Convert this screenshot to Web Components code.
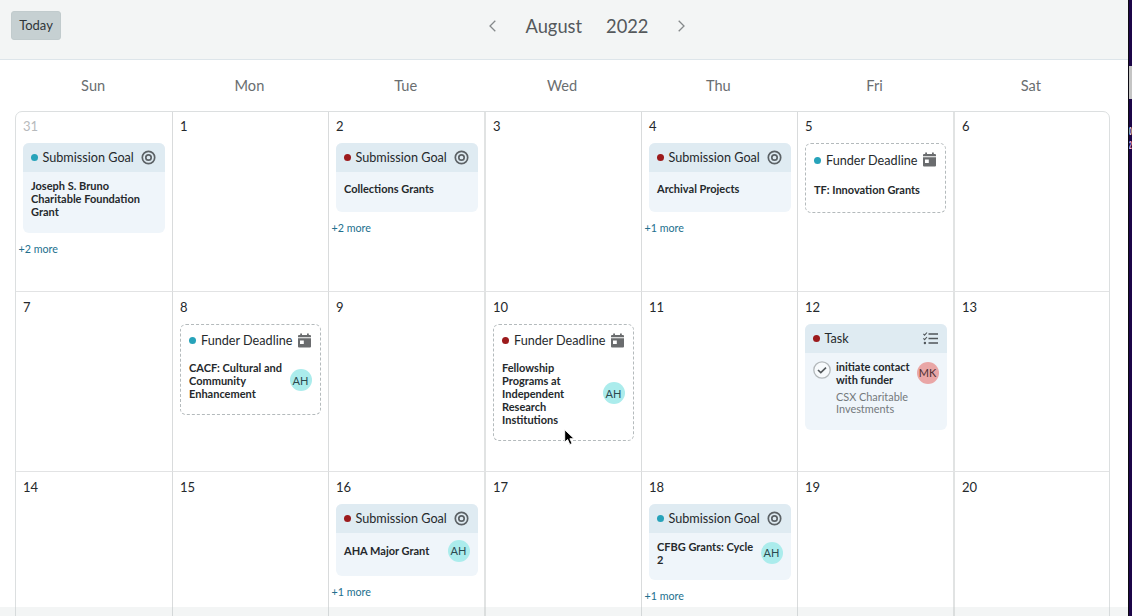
<!DOCTYPE html>
<html lang="en">
<head>
<meta charset="utf-8">
<title>Calendar</title>
<style>
html, body{
margin:0; height:100%;
overflow:hidden;
background:#1c0548;
font-family: Lato, "Liberation Sans", sans-serif;
}
</style>
</head>
<body>
<cal-app></cal-app>

<script>
let define= (name, html, setup)=> {
let template= document.createElement("template");
template.innerHTML= html;
customElements.define(name, class extends HTMLElement{
constructor(){
super();
this.attachShadow({mode:"open"}).append(template.content.cloneNode(true));
}
connectedCallback(){
if(setup) setup(this, this.shadowRoot);
}
});
};

let icons= {
target: `<svg width="15" height="15" viewBox="0 0 15 15" fill="none" stroke="#5c6266" stroke-width="1.7"><circle cx="7.5" cy="7.5" r="6.2"/><circle cx="7.5" cy="7.5" r="2.7"/></svg>`,
calendar: `<svg width="13" height="15" viewBox="0 0 13 15"><path fill="#6a6c6e" fill-rule="evenodd" d="M2.2 0.5h1.8v1.5h5V0.5h1.8v1.5H12a1 1 0 0 1 1 1v1.2H0V3a1 1 0 0 1 1-1h1.2zM0 5.2h13V13.500a1 1 0 0 1-1 1H1a1 1 0 0 1-1-1zM2 7.500v3.600h3.800V7.500z"/></svg>`,
list: `<svg width="15" height="13" viewBox="0 0 15 13" fill="none" stroke="#50565a"><path stroke-width="1.6" d="M5.500 2H15M5.500 6.500H15M5.500 11H15"/><path stroke-width="1.1" d="M.4 1.900l1.200 1.200L4 .5M.4 6.400l1.200 1.200L4 5"/><circle cx="1.900" cy="11" r="1.200" fill="#50565a" stroke="none"/></svg>`
};

//---Round initials
define("cal-avatar", `
<style>
:host{
display:flex; align-items:center; justify-content:center;
flex:none;
width:22px; height:22px;
margin-right:.5px;
border-radius:50%;
background:#abecec;
color:#2c4a50;
font-size:11px; font-weight:normal;
}
:host([tone="rose"]){ margin-top:2px; background:#e9a6a6; color:#4e3034; }
</style>
<slot></slot>
`);

//---Event card
define("cal-event", `
<style>
:host{
display:block;
box-sizing:border-box;
width:142px;
border-radius:6px;
background:#eff5fa;
overflow:hidden;
color:#25292c;
}
:host([kind="calendar"]){
width:141px;
background:#fff;
border:1px dashed #b4babc;
}
header{
display:flex; align-items:center;
box-sizing:border-box;
height:29px;
padding:0 9.5px 0 7.5px;
background:#dfebf2;
font-size:12.65px;
white-space:nowrap;
}
:host([kind="calendar"]) header{
background:none;
padding:3px 9px 0 8px;
}
.dot{
width:7px; height:7px;
margin-right:5px;
border-radius:50%;
background:#27a3ba;
}
:host([dot="red"]) .dot{ background:#9c1a1c; }
.icon{ margin-left:auto; display:flex; }
:host([kind="calendar"]) .icon{ margin-bottom:1px; }
.body{
display:flex; align-items:center; justify-content:space-between;
min-height:18px;
padding:7px 8px 14.5px 8px;
font:bold 11px/13px Lato, "Liberation Sans", sans-serif;
}
:host([kind="calendar"]) .body{ padding:7px 8px 14px 8px; }
:host([kind="list"]) .body{ align-items:flex-start; padding-bottom:16px; }
</style>
<header><span class="dot"></span><span class="label"></span><span class="icon"></span></header>
<div class="body"><slot></slot><slot name="who"></slot></div>
`, (el, root)=> {
let labels= {target:"Submission Goal", calendar:"Funder Deadline", list:"Task"};
let kind= el.getAttribute("kind");
root.querySelector(".label").textContent= labels[kind];
root.querySelector(".icon").innerHTML= icons[kind];
});

//---Task content: title and funder
define("cal-task", `
<style>
:host{ display:flex; flex:1; }
svg{ flex:none; margin:1px 5px 0 0; }
.sub{
margin-top:5.5px;
font-weight:normal; font-size:10.9px; line-height:11.5px;
color:#74797c;
}
</style>
<svg width="18" height="18" viewBox="0 0 18 18" fill="none"><circle cx="9" cy="9" r="8.200" fill="#f7fafc" stroke="#b3b8bb" stroke-width="1.300"/><path d="M5 9l2.800 2.700L13 6.700" stroke="#53585b" stroke-width="1.600"/></svg>
<div><slot></slot><div class="sub"><slot name="sub"></slot></div></div>
`);

//---One day of the grid
define("cal-day", `
<style>
:host{
display:block;
box-sizing:border-box;
min-width:0;
border-right:1px solid #d9dbdc;
border-bottom:1px solid #e2e3e4;
padding:7px 7px 0;
}
:host(:nth-child(7n+3)), :host(:nth-child(7n+6)){ border-right:2px solid #e1e3e3; }
:host(:nth-child(7n)){ border-right:0; }
.date{
height:24.5px;
font-size:13px; line-height:16px;
color:#25292c;
}
:host(:nth-child(-n+7)) .date{ margin-top:-1px; height:25px; }
:host([muted]) .date{ color:#b7babc; }
.more{
margin:8px 0 0 -4.5px;
font-size:10.7px; line-height:16px;
color:#236f8e;
}
</style>
<div class="date"></div>
<slot></slot>
<div class="more"></div>
`, (el, root)=> {
root.querySelector(".date").textContent= el.getAttribute("date");
let more= el.getAttribute("more");
if(more) root.querySelector(".more").textContent= `+${more} more`;
else root.querySelector(".more").remove();
});

//---Top bar
define("cal-bar", `
<style>
:host{
display:grid; grid-template-columns:1fr auto 1fr; align-items:start;
box-sizing:border-box;
height:60px;
padding:11px 0 0 11px;
background:#f3f5f5;
border-bottom:1px solid #dde5ea;
}
button{
justify-self:start;
width:50px; height:29px;
padding:0 0 1px;
border:1px solid #c1cbcd; border-radius:3px;
background:#c6d0d2;
color:#2f3538;
font:13px Lato, "Liberation Sans", sans-serif;
}
nav{
display:flex; align-items:center;
height:30px;
margin-left:35px;
font-size:18.3px;
color:#55595c;
}
.month{ margin:0 24px 0 30px; }
.year{ margin-right:30px; }
</style>
<button>Today</button>
<nav>
<svg width="7" height="12" viewBox="0 0 7 12" fill="none" stroke="#85898b" stroke-width="1.300"><path d="M6.300.800L1 6l5.300 5.200"/></svg>
<span class="month">August</span><span class="year">2022</span>
<svg width="7" height="12" viewBox="0 0 7 12" fill="none" stroke="#85898b" stroke-width="1.300"><path d="M.7.800L6 6 .7 11.200"/></svg>
</nav>
`);

//---Sliver of the window behind
define("cal-edge", `
<style>
:host{
display:flex; flex-direction:column; align-items:flex-start;
box-sizing:border-box;
width:4px;
padding-top:66px;
border-left:1px solid #0c0a12;
background:#1c0548;
overflow:hidden;
font:bold 11px/14px "Liberation Sans", sans-serif;
}
i{ width:3px; height:33px; margin-bottom:25px; background:#c4c4c4; }
span{ width:6px; margin-right:-3px; transform:scaleX(.45); transform-origin:0 0; color:#f4f1f8; }
span + span{ color:#efc2f2; }
</style>
<i></i><span>0</span><span>2</span>
`);

define("cal-app", `
<style>
:host{
display:grid; grid-template-columns:1128px 4px;
height:616px;
overflow:hidden;
}
main{
position:relative;
height:616px;
overflow:hidden;
background:#fff;
}
.week, .grid{
display:grid; grid-template-columns:repeat(7, 1fr);
box-sizing:border-box;
width:1095px;
margin-left:15px;
}
.week{
width:1094px;
height:51px;
font-size:14.6px; line-height:51px;
text-align:center;
color:#6a6e70;
}
.grid{
grid-template-columns:157px 156px 157px 156px 156px 157px 1fr;
grid-auto-rows:180px;
border:1px solid #dcdfe0;
border-radius:7px 7px 0 0;
}
/* translucent strip over the bottom of the grid */
.foot{
position:absolute; left:0; right:0; bottom:0;
height:9px;
background:rgba(195,205,205,.2);
}
.pointer{ position:absolute; left:564px; top:429px; }
</style>
<main>
<cal-bar></cal-bar>
<div class="week"><span>Sun</span><span>Mon</span><span>Tue</span><span>Wed</span><span>Thu</span><span>Fri</span><span>Sat</span></div>
<div class="grid">
<cal-day date="31" more="2" muted><cal-event kind="target">Joseph S. Bruno<br>Charitable Foundation<br>Grant</cal-event></cal-day>
<cal-day date="1"></cal-day>
<cal-day date="2" more="2"><cal-event kind="target" dot="red">Collections Grants</cal-event></cal-day>
<cal-day date="3"></cal-day>
<cal-day date="4" more="1"><cal-event kind="target" dot="red">Archival Projects</cal-event></cal-day>
<cal-day date="5"><cal-event kind="calendar">TF: Innovation Grants</cal-event></cal-day>
<cal-day date="6"></cal-day>

<cal-day date="7"></cal-day>
<cal-day date="8"><cal-event kind="calendar"><span>CACF: Cultural and<br>Community<br>Enhancement</span><cal-avatar slot="who">AH</cal-avatar></cal-event></cal-day>
<cal-day date="9"></cal-day>
<cal-day date="10"><cal-event kind="calendar" dot="red"><span>Fellowship<br>Programs at<br>Independent<br>Research<br>Institutions</span><cal-avatar slot="who">AH</cal-avatar></cal-event></cal-day>
<cal-day date="11"></cal-day>
<cal-day date="12"><cal-event kind="list" dot="red"><cal-task>initiate contact<br>with funder<span slot="sub">CSX Charitable<br>Investments</span></cal-task><cal-avatar slot="who" tone="rose">MK</cal-avatar></cal-event></cal-day>
<cal-day date="13"></cal-day>

<cal-day date="14"></cal-day>
<cal-day date="15"></cal-day>
<cal-day date="16" more="1"><cal-event kind="target" dot="red"><span>AHA Major Grant</span><cal-avatar slot="who">AH</cal-avatar></cal-event></cal-day>
<cal-day date="17"></cal-day>
<cal-day date="18" more="1"><cal-event kind="target"><span>CFBG Grants: Cycle<br>2</span><cal-avatar slot="who">AH</cal-avatar></cal-event></cal-day>
<cal-day date="19"></cal-day>
<cal-day date="20"></cal-day>
</div>
<div class="foot"></div>
<svg class="pointer" width="12" height="17" viewBox="0 0 12 17"><path d="M.7.800v12.400l2.900-2.700 2.200 5 2.300-1-2.200-4.800h4.200z" fill="#000" stroke="#fff" stroke-width=".9"/></svg>
</main>
<cal-edge></cal-edge>
`);
</script>
</body>
</html>
